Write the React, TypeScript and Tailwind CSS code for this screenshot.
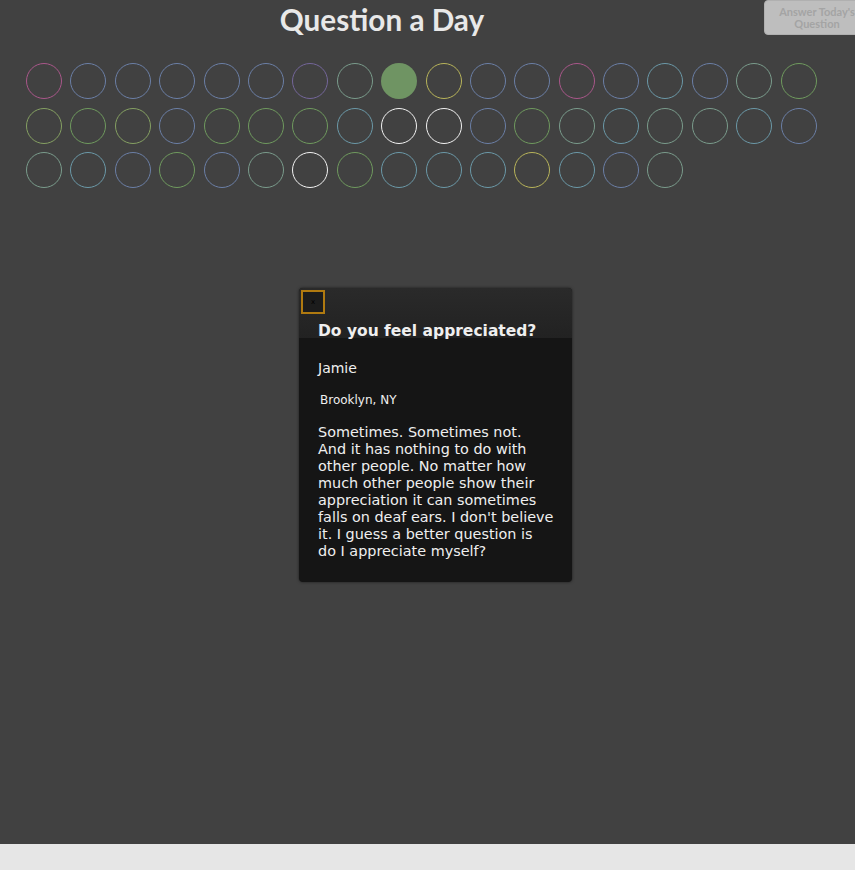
import React from 'react'

const PINK = '#a9578a'
const BLUE = '#6b7fa6'
const PURPLE = '#74669a'
const SAGE = '#7a9c8c'
const GREEN = '#6f9a5e'
const OLIVE = '#85a062'
const YELLOW = '#b8b45a'
const TEAL = '#6b99a8'
const WHITE = '#f2f2f2'

type Day = { color: string; filled?: boolean }

const days: Day[] = [
  // row 1
  { color: PINK }, { color: BLUE }, { color: BLUE }, { color: BLUE }, { color: BLUE }, { color: BLUE },
  { color: PURPLE }, { color: SAGE }, { color: '#6f9463', filled: true }, { color: YELLOW }, { color: BLUE }, { color: BLUE },
  { color: PINK }, { color: BLUE }, { color: TEAL }, { color: BLUE }, { color: SAGE }, { color: GREEN },
  // row 2
  { color: OLIVE }, { color: GREEN }, { color: OLIVE }, { color: BLUE }, { color: GREEN }, { color: GREEN },
  { color: GREEN }, { color: TEAL }, { color: WHITE }, { color: WHITE }, { color: BLUE }, { color: GREEN },
  { color: SAGE }, { color: TEAL }, { color: SAGE }, { color: SAGE }, { color: TEAL }, { color: BLUE },
  // row 3
  { color: SAGE }, { color: TEAL }, { color: BLUE }, { color: GREEN }, { color: BLUE }, { color: SAGE },
  { color: WHITE }, { color: GREEN }, { color: TEAL }, { color: TEAL }, { color: TEAL }, { color: YELLOW },
  { color: TEAL }, { color: BLUE }, { color: SAGE },
]

const answerLines = [
  'Sometimes. Sometimes not.',
  'And it has nothing to do with',
  'other people. No matter how',
  'much other people show their',
  'appreciation it can sometimes',
  "falls on deaf ears. I don't believe",
  'it. I guess a better question is',
  'do I appreciate myself?',
]

export default function App() {
  return (
    <div className="min-h-screen bg-[#e6e6e6] overflow-hidden">
      <div className="relative h-[844px] bg-[#414141] w-[855px]">
        {/* Header */}
        <div className="flex items-start h-[63px] w-[900px]">
          <h1 className="shrink-0 w-[764px] text-center text-[29.7px] leading-[40px] font-bold text-[#e8e8e8] font-['Lato',sans-serif]">
            Question a Day
          </h1>
          <button className="shrink-0 w-[106px] h-[35px] rounded-[4px] bg-[#bebebe] text-[#a4a4a4] text-[11px] leading-[12px] font-bold font-['Lato',sans-serif] border border-[#b0b0b0]">
            Answer Today's<br />Question
          </button>
        </div>

        {/* Day grid */}
        <div className="grid grid-cols-[repeat(18,36px)] gap-x-[8.4px] gap-y-[8.5px] pl-[26px]">
          {days.map((d, i) => (
            <div
              key={i}
              className={`w-9 h-9 rounded-full ${d.filled ? '' : 'border-[1.5px]'}`}
              style={d.filled ? { backgroundColor: d.color } : { borderColor: d.color }}
            />
          ))}
        </div>

        {/* Answer popup */}
        <div className="absolute left-[299px] top-[288px] w-[273px] h-[294px] rounded-[4px] bg-[#151515] shadow-[0_0_3px_rgba(0,0,0,0.6)] overflow-hidden font-['DejaVu_Sans',sans-serif] text-[#efefef]">
          <div className="h-[50px] bg-gradient-to-b from-[#2a2a2a] to-[#222222]" />
          <div className="absolute inset-0">
            <button className="absolute left-[2px] top-[2px] w-[24px] h-[24px] border-2 border-[#b07a10] bg-[#1c1c1c] text-[7px] leading-none text-black flex items-center justify-center">
              x
            </button>
            <div className="pt-[33px] pl-[19px] w-[265px]">
              <h2 className="text-[15.5px] leading-[20px] font-bold">Do you feel appreciated?</h2>
              <p className="mt-[19px] text-[14px] leading-[17px]">Jamie</p>
              <p className="mt-[16px] pl-[2px] text-[12px] leading-[15px]">Brooklyn, NY</p>
              <p className="mt-[16px] text-[14.4px] leading-[17px] whitespace-nowrap">
                {answerLines.map((line) => (
                  <span key={line} className="block">{line}</span>
                ))}
              </p>
            </div>
          </div>
        </div>
      </div>
    </div>
  )
}
